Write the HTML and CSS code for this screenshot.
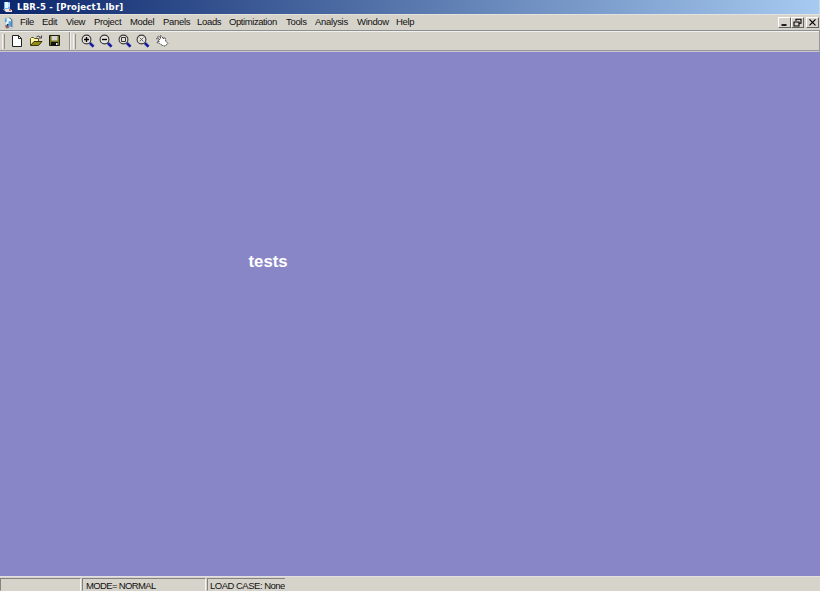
FILE: index.html
```html
<!DOCTYPE html>
<html lang="en">
<head>
<meta charset="utf-8">
<title>LBR-5 - [Project1.lbr]</title>
<link rel="stylesheet" href="styles.css">
</head>
<body>
<svg class="defs" width="0" height="0" aria-hidden="true">
  <symbol id="lens" viewBox="0 0 14 14">
    <path d="M8.800 9l3.700 3.600" stroke="#8c98bf" stroke-width="3.400"/>
    <path d="M8.800 9l3.700 3.600" stroke="#15159b" stroke-width="2.200"/>
    <circle cx="5.500" cy="5.500" r="4.400" fill="#e5e4dd" stroke="#383838" stroke-width="1.100"/>
  </symbol>
</svg>
<div class="window">
  <header class="titlebar">
    <svg class="app-icon" viewBox="0 0 12 13"><path d="M2 1h6v7H2z" fill="#76b6ee"/><path d="M3 1h3v6H3z" fill="#e9f4ff"/><path d="M6 2h2v4H6z" fill="#b7dcff"/><path d="M1 8h6l3 1v2H4z" fill="#e7e7ed"/><path d="M7 8h2v2H7z" fill="#d46d45"/><path d="M1 8h2v1H1z" fill="#ad8379"/></svg>
    <span class="title">LBR-5 - [Project1.lbr]</span>
  </header>
  <nav class="menubar">
    <svg class="doc-icon" viewBox="0 0 12 14"><path d="M1.500 1.500h6l2 2v9h-8z" fill="#eef3f6" stroke="#a5b5c0" stroke-width=".7"/><path d="M1 2h2v4H1zM5 5h3v6H5z" fill="#54a5df"/><path d="M6 1.500l2.500 2v8" fill="none" stroke="#234d83"/><path d="M1 10l3-1 2 3-3 1z" fill="#9a5549"/><path d="M3 8h2v2H3z" fill="#173f75"/></svg>
    <span>File</span><span>Edit</span><span>View</span><span>Project</span><span>Model</span><span>Panels</span><span>Loads</span><span class="tight">Optimization</span><span>Tools</span><span>Analysis</span><span>Window</span><span>Help</span>
    <div class="controls">
      <button aria-label="Minimize"><svg viewBox="0 0 10 9"><path d="M2 7h5" stroke="#000" stroke-width="1.700"/></svg></button><button aria-label="Restore"><svg viewBox="0 0 10 9"><path d="M3.500 3V1.200h5v4H7M3 1.200h6M1.500 4h5v4h-5zM1 4h6" fill="none" stroke="#000" stroke-width="1.100"/></svg></button><button class="close" aria-label="Close"><svg viewBox="0 0 10 9"><path d="M2 1.300l6 6M8 1.300l-6 6" stroke="#000" stroke-width="1.200"/></svg></button>
    </div>
  </nav>
  <div class="toolbar">
    <i class="grip"></i>
    <div class="tools files">
      <svg viewBox="0 0 14 14"><path d="M2.500 1.500h6l3 3v8h-9z" fill="#fff" stroke="#222"/><path d="M8.500 1.500v3h3" fill="none" stroke="#222"/></svg>
      <svg viewBox="0 0 14 14"><path d="M1.500 11V4.500l1-1h2l1 1h4V7" fill="#fff7a6" stroke="#55501a"/><path d="M1.500 11.500L5 7.500h8L9.500 11.500z" fill="#938d16" stroke="#38370c"/><path d="M7.500 3Q9 1 11.500 3.200M12.500 1.500v2.500H10" fill="none" stroke="#333" stroke-width=".9"/></svg>
      <svg viewBox="0 0 14 14"><path d="M2.500 1.500h10v10h-10z" fill="#77731a" stroke="#1d1d0c"/><path d="M4.500 2h6v4.500h-6z" fill="#d8d6cc"/><path d="M4 8h7v4H4z" fill="#111"/><path d="M9 9h1.500v2H9z" fill="#eee"/></svg>
    </div>
    <i class="rule"></i><i class="grip"></i>
    <div class="tools view">
      <svg viewBox="0 0 14 14"><use href="#lens"/><path d="M3 5.500h5M5.500 3v5" stroke="#000" stroke-width="1.400"/></svg>
      <svg viewBox="0 0 14 14"><use href="#lens"/><path d="M3 5.500h5" stroke="#000" stroke-width="1.400"/></svg>
      <svg viewBox="0 0 14 14"><use href="#lens"/><path d="M3.500 3.500h4v4h-4z" fill="none" stroke="#333"/></svg>
      <svg viewBox="0 0 14 14"><use href="#lens"/><path d="M3.700 3.700l3.600 3.600M7.300 3.700L3.700 7.300" stroke="#555" stroke-width=".9"/></svg>
      <svg viewBox="0 0 14 14"><path d="M7.500 11.500L4.500 9.500l-2.500-1 .5-1 2 .2L1.500 5l.6-1L5 6 2.500 3l.8-1L6 4.500 5 2l1-.5L8.500 5 9 3.500l1 .3L11 7.500l2 2-3 2.500z" fill="#fff" stroke="#333" stroke-width=".85" stroke-dasharray="2 .5"/></svg>
    </div>
  </div>
  <main class="workspace"><h1>tests</h1></main>
  <footer class="statusbar"><span></span><span>MODE= NORMAL</span><span>LOAD CASE: None</span></footer>
</div>
</body>
</html>
```
FILE: styles.css
```css
* { box-sizing: border-box; }
body { margin: 0; overflow: hidden; background: #d6d3cb; font: 9px "Liberation Sans", Arial, sans-serif; color: #111; }
.defs { position: absolute; }
.window { width: 820px; height: 591px; display: grid; grid-template-rows: 14px 16px 22px 524px 15px; }
.titlebar { display: flex; align-items: center; padding-left: 2px; background: linear-gradient(90deg, #0b266b, #a6caf0); border-right: 1px solid #c5d9ed; }
.app-icon { width: 12px; height: 13px; margin-right: 3px; }
.title { color: #fff; font: bold 9.500px/14px "DejaVu Sans Condensed", "DejaVu Sans", sans-serif; letter-spacing: .2px; white-space: pre; }
.menubar { display: grid; grid-template-columns: 16px 22px 24px 28px 36px 33px 34px 32px 57px 29px 42px 39px 382px 42px; align-items: center; padding-left: 4px; border-top: 1px solid #e5e2dc; line-height: 14px; white-space: nowrap; }
.menubar span { font-size: 9.500px; letter-spacing: -.32px; padding-bottom: 1px; }
.menubar .tight { letter-spacing: -.42px; }
.doc-icon { width: 11px; height: 14px; }
.controls { display: flex; height: 11px; }
.controls button { width: 13px; height: 11px; padding: 0; border: 1px solid; border-color: #fff #64625e #64625e #fff; background: #d6d3cb; }
.controls .close { margin-left: 2px; }
.controls svg { display: block; width: 11px; height: 9px; }
.toolbar { display: flex; align-items: center; border-top: 1px solid #8c9092; border-bottom: 1px solid #c8c7ce; border-right: 1px solid #999; box-shadow: inset 0 1px #f3f1ed, inset 0 -1px #9998a0; padding-left: 2px; }
.grip { width: 3px; height: 15px; border-left: 1px solid #f5f3ee; border-right: 1px solid #918f8b; }
.rule { width: 2px; height: 18px; margin: 0 2px 0 8px; border-left: 1px solid #999791; border-right: 1px solid #eee; }
.tools { display: flex; align-items: center; }
.tools svg { width: 14px; height: 14px; flex: none; }
.files { gap: 4.500px; margin-left: 5px; }
.view { gap: 4.500px; margin-left: 4.500px; }
.workspace { background: #8886c6; padding: 200px 0 0 248.500px; }
h1 { margin: 0; color: #fff; font-size: 16.800px; line-height: 19px; }
.statusbar { display: grid; grid-template-columns: 81px 124px 78px; gap: 1px; padding-top: 1px; border-top: 1px solid #e2e0e2; }
.statusbar span { height: 13px; padding-left: 3px; border: 1px solid; border-color: #85837f #f7f5f0 transparent #85837f; line-height: 13px; font-size: 9.500px; letter-spacing: -.65px; white-space: nowrap; overflow: hidden; }
.statusbar span:last-child { padding-left: 2px; border-right: 0; letter-spacing: -.5px; }
```
